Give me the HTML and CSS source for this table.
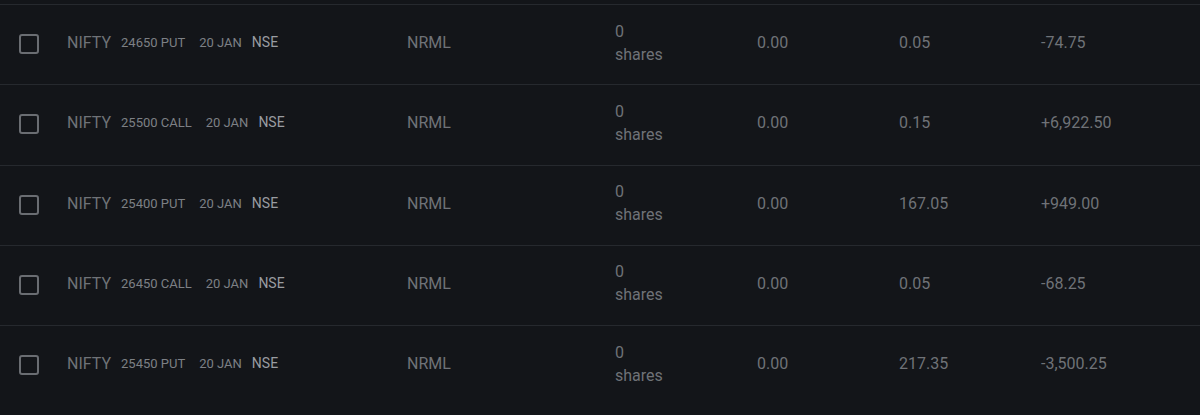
FILE: index.html
```html
<!DOCTYPE html>
<html>
<head>
<meta charset="utf-8">
<link rel="stylesheet" href="styles.css">
</head>
<body>
<div class="table">
  <div class="row">
    <div class="cell check"><span class="box"></span></div>
    <div class="cell inst"><span class="sym">NIFTY</span><span class="strike">24650 PUT</span><span class="exp">20 JAN</span><span class="exch">NSE</span></div>
    <div class="cell">NRML</div>
    <div class="cell qty"><span>0</span><span>shares</span></div>
    <div class="cell">0.00</div>
    <div class="cell">0.05</div>
    <div class="cell">-74.75</div>
  </div>
  <div class="row">
    <div class="cell check"><span class="box"></span></div>
    <div class="cell inst"><span class="sym">NIFTY</span><span class="strike">25500 CALL</span><span class="exp">20 JAN</span><span class="exch">NSE</span></div>
    <div class="cell">NRML</div>
    <div class="cell qty"><span>0</span><span>shares</span></div>
    <div class="cell">0.00</div>
    <div class="cell">0.15</div>
    <div class="cell">+6,922.50</div>
  </div>
  <div class="row">
    <div class="cell check"><span class="box"></span></div>
    <div class="cell inst"><span class="sym">NIFTY</span><span class="strike">25400 PUT</span><span class="exp">20 JAN</span><span class="exch">NSE</span></div>
    <div class="cell">NRML</div>
    <div class="cell qty"><span>0</span><span>shares</span></div>
    <div class="cell">0.00</div>
    <div class="cell">167.05</div>
    <div class="cell">+949.00</div>
  </div>
  <div class="row">
    <div class="cell check"><span class="box"></span></div>
    <div class="cell inst"><span class="sym">NIFTY</span><span class="strike">26450 CALL</span><span class="exp">20 JAN</span><span class="exch">NSE</span></div>
    <div class="cell">NRML</div>
    <div class="cell qty"><span>0</span><span>shares</span></div>
    <div class="cell">0.00</div>
    <div class="cell">0.05</div>
    <div class="cell">-68.25</div>
  </div>
  <div class="row">
    <div class="cell check"><span class="box"></span></div>
    <div class="cell inst"><span class="sym">NIFTY</span><span class="strike">25450 PUT</span><span class="exp">20 JAN</span><span class="exch">NSE</span></div>
    <div class="cell">NRML</div>
    <div class="cell qty"><span>0</span><span>shares</span></div>
    <div class="cell">0.00</div>
    <div class="cell">217.35</div>
    <div class="cell">-3,500.25</div>
  </div>
</div>
</body>
</html>
```
FILE: styles.css
```css
html, body {
  margin: 0;
  padding: 0;
  background: #131519;
  height: 100%;
}
body {
  font-family: Roboto, "Liberation Sans", sans-serif;
  color: #6f7277;
  font-size: 16px;
}
.table {
  padding-top: 4px;
}
.row {
  display: grid;
  grid-template-columns: 67px 340px 208px 142px 142px 142px 1fr;
  height: 80.25px;
  padding-bottom: 4px;
  border-top: 1px solid #26292e;
  box-sizing: border-box;
  align-items: center;
}
.cell {
  display: flex;
  align-items: center;
  line-height: 23px;
}
.check {
  padding-left: 19px;
  padding-top: 3px;
}
.box {
  width: 20px;
  height: 20px;
  box-sizing: border-box;
  border: 2px solid #6a6d72;
  border-radius: 3px;
}
.sym {
  margin-right: 10px;
}
.strike {
  font-size: 13px;
  color: #7d8085;
  margin-right: 14px;
}
.exp {
  font-size: 13px;
  color: #7d8085;
  margin-right: 10px;
}
.exch {
  font-size: 14px;
  color: #999ca1;
}
.qty {
  flex-direction: column;
  align-items: flex-start;
}
```
